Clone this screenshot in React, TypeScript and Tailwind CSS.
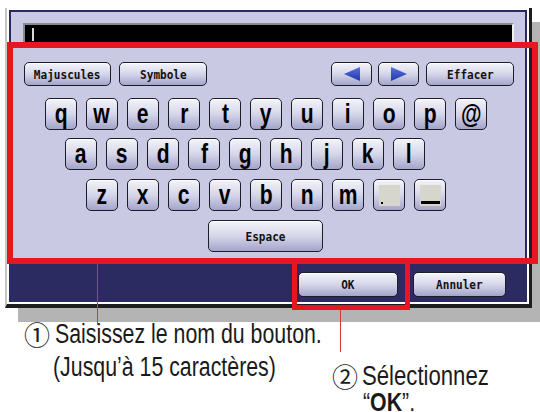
import React from "react";

const keyBase =
  "flex items-center justify-center rounded-[5px] border-[1.5px] border-[#1d1d28] bg-gradient-to-b from-[#f4f4fa] via-[#d6d6ea] to-[#a4a4cb] shadow-[inset_0_1px_0_#ffffff]";

function Letter({ ch }: { ch: string }) {
  return (
    <div className={`${keyBase} h-[32px] w-[32px]`}>
      <span className="inline-block scale-x-[0.78] font-['Liberation_Sans'] text-[27px] font-bold leading-none text-black">
        {ch}
      </span>
    </div>
  );
}

function SmallButton({ label, className }: { label: string; className: string }) {
  return (
    <div className={`${keyBase} ${className}`}>
      <span className="inline-block scale-x-[0.85] font-['DejaVu_Sans_Mono'] text-[13px] font-bold leading-none text-[#111]">
        {label}
      </span>
    </div>
  );
}

function Arrow({ dir }: { dir: "left" | "right" }) {
  return (
    <div className={`${keyBase} h-[24px] w-[41px]`}>
      <svg width="18" height="16" viewBox="0 0 18 16">
        <defs>
          <linearGradient id={`ar-${dir}`} x1="0" y1="0" x2="0" y2="1">
            <stop offset="0" stopColor="#5a6fe0" />
            <stop offset="1" stopColor="#1f3aa8" />
          </linearGradient>
        </defs>
        {dir === "left" ? (
          <polygon points="1,8 17,1 17,15" fill={`url(#ar-${dir})`} />
        ) : (
          <polygon points="17,8 1,1 1,15" fill={`url(#ar-${dir})`} />
        )}
      </svg>
    </div>
  );
}

function SpecialKey({ kind }: { kind: "dot" | "under" }) {
  return (
    <div className={`${keyBase} h-[32px] w-[32px]`}>
      <div className="relative h-[21px] w-[21px] bg-[#d6d6cc]">
        {kind === "dot" ? (
          <div className="absolute bottom-[2px] left-[2px] h-[2px] w-[2px] bg-black" />
        ) : (
          <div className="absolute bottom-[2px] left-[1px] h-[3px] w-[19px] bg-black" />
        )}
      </div>
    </div>
  );
}

const row1 = ["q", "w", "e", "r", "t", "y", "u", "i", "o", "p", "@"];
const row2 = ["a", "s", "d", "f", "g", "h", "j", "k", "l"];
const row3 = ["z", "x", "c", "v", "b", "n", "m"];

export default function App() {
  return (
    <div className="relative h-[412px] w-[540px] overflow-hidden bg-white font-['Liberation_Sans']">
      {/* device screen */}
      <div className="ml-[5px] mt-[8px] w-[527px] border-b-4 border-l-2 border-r-[3px] border-b-[#1e1e1e] border-l-[#c6c6c6] border-r-[#1e1e1e] bg-white p-[2px] shadow-[13px_14px_0_#b4b4b4]">
        <div className="border-2 border-[#2b2b62] bg-[#c9c9e3]">
          <div className="flex h-[251px] flex-col">
            {/* name field */}
            <div className="ml-[12px] mr-[11px] mt-[11px] h-[22px] border-l-2 border-t-2 border-r-2 border-l-[#8a8a8a] border-t-[#8a8a8a] border-r-[#f0f0f0] bg-black pl-[7px] pt-[3px]">
              <div className="h-[13px] w-[2px] bg-[#d8d8d8]" />
            </div>
            {/* function row */}
            <div className="mt-[17px] flex pl-[13px] pr-[11px]">
              <SmallButton label="Majuscules" className="h-[24px] w-[87px]" />
              <SmallButton label="Symbole" className="ml-2 h-[24px] w-[88px]" />
              <div className="flex-1" />
              <Arrow dir="left" />
              <div className="ml-[6px]">
                <Arrow dir="right" />
              </div>
              <SmallButton label="Effacer" className="ml-[7px] h-[24px] w-[88px]" />
            </div>
            {/* keyboard */}
            <div className="mt-[12px] flex gap-[9px] pl-[34px]">
              {row1.map((c) => (
                <Letter key={c} ch={c} />
              ))}
            </div>
            <div className="mt-2 flex gap-[9px] pl-[54px]">
              {row2.map((c) => (
                <Letter key={c} ch={c} />
              ))}
            </div>
            <div className="mt-[9px] flex gap-[9px] pl-[75px]">
              {row3.map((c) => (
                <Letter key={c} ch={c} />
              ))}
              <SpecialKey kind="dot" />
              <SpecialKey kind="under" />
            </div>
            <div className="mt-[9px] flex pl-[197px]">
              <SmallButton label="Espace" className="h-[32px] w-[115px]" />
            </div>
          </div>
          {/* bottom bar */}
          <div className="flex h-[37px] justify-end gap-[15px] bg-[#2b2b62] pr-[19px] pt-[9px]">
            <SmallButton label="OK" className="h-[25px] w-[100px]" />
            <SmallButton label="Annuler" className="h-[25px] w-[93px]" />
          </div>
        </div>
      </div>

      {/* callout frames and leader lines */}
      <div className="absolute left-[7px] top-[42px] h-[222px] w-[531px] border-[6px] border-[#e8161e]" />
      <div className="absolute left-[292px] top-[258px] h-[52px] w-[118px] border-[5px] border-[#e8161e]" />
      <div className="absolute left-[97px] top-[264px] h-[61px] w-px bg-[#d8343c]" />
      <div className="absolute left-[340px] top-[310px] h-[42px] w-px bg-[#d8343c]" />

      {/* captions */}
      <div className="absolute left-[24px] top-[321px] text-[#1a1a1a]">
        <span className="font-['Noto_Sans_CJK_JP',sans-serif] text-[26px] leading-none">①</span>
      </div>
      <div className="absolute left-[55px] top-[321px] text-[#1a1a1a]">
        <span className="inline-block origin-left scale-x-[0.79] text-[27px] leading-none">
          Saisissez le nom du bouton.
        </span>
      </div>
      <div className="absolute left-[53px] top-[354px] text-[#1a1a1a]">
        <span className="inline-block origin-left scale-x-[0.79] text-[27px] leading-none">
          (Jusqu’à 15 caractères)
        </span>
      </div>
      <div className="absolute left-[332px] top-[363px] text-[#1a1a1a]">
        <span className="font-['Noto_Sans_CJK_JP',sans-serif] text-[26px] leading-none">②</span>
      </div>
      <div className="absolute left-[362px] top-[363px] text-[#1a1a1a]">
        <span className="inline-block origin-left scale-x-[0.82] text-[27px] leading-none">
          Sélectionnez
        </span>
      </div>
      <div className="absolute left-[363px] top-[389px] text-[#1a1a1a]">
        <span className="inline-block origin-left scale-x-[0.82] text-[26px] leading-none">
          “<b>OK</b>”.
        </span>
      </div>
    </div>
  );
}
